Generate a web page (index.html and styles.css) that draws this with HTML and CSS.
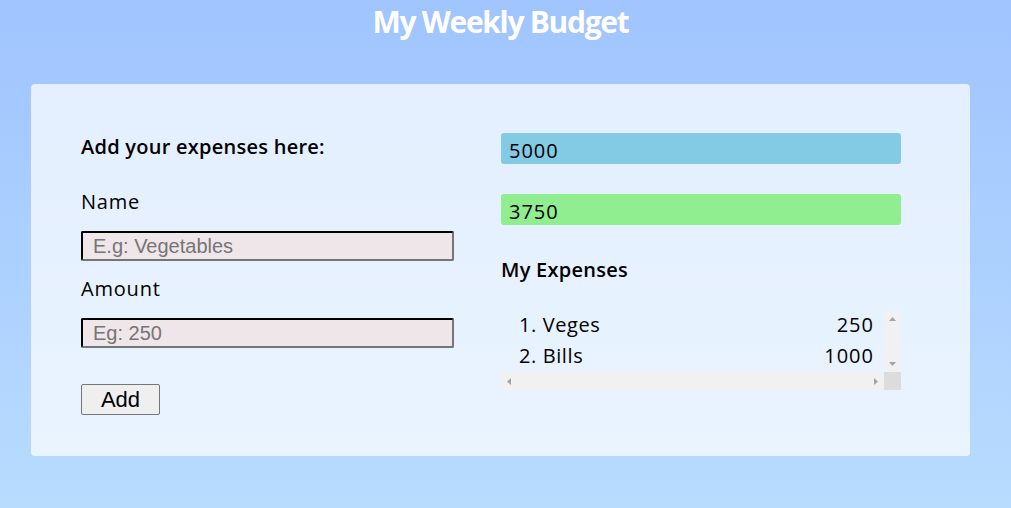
FILE: index.html
```html
<!DOCTYPE html>
<html lang="en">
<head>
<meta charset="utf-8">
<title>My Weekly Budget</title>
<link rel="stylesheet" href="styles.css">
</head>
<body>
<h1 class="title">My Weekly Budget</h1>
<main class="card">
  <section class="col-left">
    <h2 class="heading">Add your expenses here:</h2>
    <label class="label" for="name">Name</label>
    <input class="field" id="name" type="text" placeholder="E.g: Vegetables">
    <label class="label label-amount" for="amount">Amount</label>
    <input class="field" id="amount" type="text" placeholder="Eg: 250">
    <button class="add-btn" type="button">Add</button>
  </section>
  <section class="col-right">
    <div class="bar bar-budget">5000</div>
    <div class="bar bar-balance">3750</div>
    <h2 class="heading heading-exp">My Expenses</h2>
    <div class="scrollbox">
      <div class="scroll-main">
        <ol class="exp-list">
          <li class="exp-item"><span>1. Veges</span><span class="num">250</span></li>
          <li class="exp-item"><span>2. Bills</span><span class="num">1000</span></li>
        </ol>
        <div class="vscroll">
          <svg class="arrow" width="7" height="4" viewBox="0 0 7 4"><path d="M0 4 L3.5 0 L7 4Z" fill="#a3a3a3"/></svg>
          <svg class="arrow" width="7" height="4" viewBox="0 0 7 4"><path d="M0 0 L3.5 4 L7 0Z" fill="#a3a3a3"/></svg>
        </div>
      </div>
      <div class="scroll-bottom">
        <div class="hscroll">
          <svg class="arrow" width="4" height="7" viewBox="0 0 4 7"><path d="M4 0 L0 3.5 L4 7Z" fill="#a3a3a3"/></svg>
          <svg class="arrow" width="4" height="7" viewBox="0 0 4 7"><path d="M0 0 L4 3.5 L0 7Z" fill="#a3a3a3"/></svg>
        </div>
        <div class="corner"></div>
      </div>
    </div>
  </section>
</main>
</body>
</html>
```

FILE: styles.css
```css
html {
  min-height: 100%;
  background: linear-gradient(to bottom, #a0c4fe 0%, #b8dcfe 100%);
}
body {
  margin: 0;
  padding: 0 31px;
  font-family: "Open Sans", "Noto Sans", sans-serif;
  color: #000;
}
.title {
  margin: 0;
  width: 939px;
  padding-top: 4px;
  height: 80px;
  text-align: center;
  color: #fff;
  font-size: 30px;
  font-weight: 700;
  line-height: 36px;
  letter-spacing: -1.3px;
}
.card {
  width: 939px;
  box-sizing: border-box;
  height: 372px;
  background: rgba(255, 255, 255, 0.7);
  border-radius: 4px;
  padding: 40px 50px;
  display: flex;
  gap: 47px;
}
.col-left {
  width: 373px;
  display: flex;
  flex-direction: column;
  align-items: flex-start;
}
.heading {
  margin: 0;
  font-size: 20px;
  font-weight: 600;
  line-height: 26px;
  letter-spacing: 0.25px;
  margin-top: 10px;
}
.label {
  font-size: 20px;
  line-height: 26px;
  margin-top: 29px;
  letter-spacing: 0.8px;
}
.label-amount {
  margin-top: 15px;
}
.field {
  margin-top: 16px;
  width: 373px;
  height: 30px;
  box-sizing: border-box;
  border: 2px inset #767676;
  border-color: #1f1f1f #767676 #767676 #1f1f1f;
  border-radius: 2px;
  background: #efe6ea;
  font-family: "Liberation Sans", Arial, sans-serif;
  font-size: 20px;
  padding: 0 10px;
}
.field::placeholder {
  color: #757575;
}
.add-btn {
  margin-top: 36px;
  width: 79px;
  height: 31px;
  background: #efefef;
  border: 1px solid #767676;
  border-radius: 2px;
  font-family: "Liberation Sans", Arial, sans-serif;
  font-size: 22px;
  line-height: 29px;
  color: #000;
  padding: 0;
}
.col-right {
  width: 400px;
  display: flex;
  flex-direction: column;
  padding-top: 9px;
}
.bar {
  height: 31px;
  border-radius: 3px;
  box-sizing: border-box;
  padding: 4px 8px 0;
  font-size: 20px;
  line-height: 28px;
  letter-spacing: 1px;
}
.bar-budget {
  background: #83cae4;
}
.bar-balance {
  background: #90ee90;
  margin-top: 30px;
}
.heading-exp {
  margin-top: 32px;
}
.scrollbox {
  margin-top: 28px;
  width: 400px;
  height: 79px;
  display: flex;
  flex-direction: column;
}
.scroll-main {
  flex: 1;
  display: flex;
  min-height: 0;
}
.exp-list {
  flex: 1;
  margin: -2px 0 0;
  padding: 0 11px 0 18px;
  list-style: none;
  font-size: 20px;
  line-height: 31px;
  letter-spacing: 0.6px;
}
.exp-item {
  display: flex;
  justify-content: space-between;
}
.num {
  letter-spacing: 1px;
  margin-right: -1px;
}
.vscroll {
  width: 17px;
  background: #f1f1f1;
  display: flex;
  flex-direction: column;
  justify-content: space-between;
  align-items: center;
  padding: 6px 0;
  box-sizing: border-box;
}
.scroll-bottom {
  height: 18px;
  display: flex;
}
.hscroll {
  flex: 1;
  background: #f1f1f1;
  display: flex;
  justify-content: space-between;
  align-items: center;
  padding: 0 6px;
}
.corner {
  width: 17px;
  background: #dcdcdc;
}
.arrow {
  display: block;
}
```
